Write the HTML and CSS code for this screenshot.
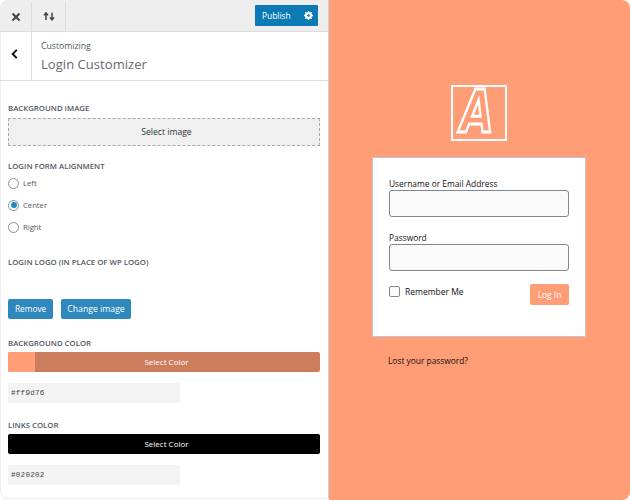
FILE: index.html
```html
<!DOCTYPE html>
<html lang="en">
<head>
<meta charset="UTF-8" />
<meta name="viewport" content="width=device-width, initial-scale=1.0" />
<title>Login Customizer</title>
<link rel="stylesheet" href="styles.css">
</head>
<body>
<div class="window">
<aside class="sidebar">
    <div class="topbar">
        <div class="top-btn close-btn">
            <svg width="10" height="10" viewBox="0 0 10 10"><path d="M1.5 1.5l7 7M8.5 1.5l-7 7" stroke="#3c434a" stroke-width="2" fill="none"/></svg>
        </div>
        <div class="top-btn order-btn">
            <svg width="12" height="9" viewBox="0 0 12 9"><path d="M3 8V1.5M1 3.4L3 .9l2 2.5M9 .8v6.5M7 5.4l2 2.5 2-2.5" stroke="#3c434a" stroke-width="1.5" fill="none"/></svg>
        </div>
        <div class="publish">
            <span>Publish</span>
            <svg width="9" height="9" viewBox="0 0 10 10"><circle cx="5" cy="5" r="2.9" fill="none" stroke="#fff" stroke-width="2"/><path d="M5 0v10M0 5h10M1.5 1.5l7 7M8.5 1.5l-7 7" stroke="#fff" stroke-width="1.4"/><circle cx="5" cy="5" r="1.5" fill="#0b7ab5"/></svg>
        </div>
    </div>
    <div class="section-head">
        <div class="back">
            <svg width="7" height="10" viewBox="0 0 7 10"><path d="M5.8.8L1.6 5l4.2 4.2" stroke="#000" stroke-width="1.8" fill="none"/></svg>
        </div>
        <div class="head-text">
            <div class="crumb">Customizing</div>
            <div class="head-title">Login Customizer</div>
        </div>
    </div>
    <div class="controls">
        <div class="control bg-image">
            <div class="label">BACKGROUND IMAGE</div>
            <div class="select-image">Select image</div>
        </div>
        <div class="control align">
            <div class="label">LOGIN FORM ALIGNMENT</div>
            <div class="radio"><span class="dot"></span>Left</div>
            <div class="radio"><span class="dot on"></span>Center</div>
            <div class="radio"><span class="dot"></span>Right</div>
        </div>
        <div class="control logo-ctl">
            <div class="label">LOGIN LOGO (IN PLACE OF WP LOGO)</div>
            <div class="logo-btns">
                <div class="wp-btn">Remove</div>
                <div class="wp-btn">Change image</div>
            </div>
        </div>
        <div class="control color-ctl">
            <div class="label">BACKGROUND COLOR</div>
            <div class="color-btn peach"><span class="swatch"></span><span class="color-text">Select Color</span></div>
            <div class="hex">#ff9d76</div>
        </div>
        <div class="control color-ctl links">
            <div class="label">LINKS COLOR</div>
            <div class="color-btn black"><span class="color-text">Select Color</span></div>
            <div class="hex">#020202</div>
        </div>
    </div>
</aside>
<main class="preview">
    <div class="login-logo">
        <svg class="logo-svg" width="56" height="56" viewBox="0 0 56 56"><rect x="1" y="1" width="54" height="54" fill="none" stroke="#fff" stroke-width="2"/><text transform="translate(26 47) scale(.74 1)" text-anchor="middle" class="logo-a">A</text></svg>
    </div>
    <form class="login-form">
        <div class="field-label">Username or Email Address</div>
        <div class="input"></div>
        <div class="field-label second">Password</div>
        <div class="input"></div>
        <div class="form-foot">
            <div class="remember"><span class="check"></span>Remember Me</div>
            <div class="login-btn">Log In</div>
        </div>
    </form>
    <div class="lost">Lost your password?</div>
</main>
</div>
</body>
</html>
```

FILE: styles.css
```css
html, body { margin: 0; padding: 0; background: #fff; }
body { font-family: "Open Sans", "Noto Sans", sans-serif; color: #3c434a; }
.window { display: flex; width: 630px; height: 500px; border-radius: 8px; overflow: hidden; }

.sidebar { width: 328px; height: 499px; border-right: 1px solid #c9d0d4; background: #fff; box-shadow: inset 1px 0 #eee, inset 0 -1px #eee; border-bottom-left-radius: 8px; }
.topbar { display: flex; align-items: center; height: 31px; background: #eee; border-bottom: 1px solid #ddd; }
.top-btn { display: flex; align-items: center; justify-content: center; height: 29px; margin-top: 2px; border-right: 1px solid #ddd; }
.close-btn { width: 31px; }
.order-btn { width: 33px; }
.publish { display: flex; align-items: center; justify-content: space-between; width: 63px; height: 21px; box-sizing: border-box; padding: 0 5px 0 7px; margin-left: auto; margin-right: 10px; background: #0b7ab5; color: #fff; font-size: 8.4px; border-radius: 1px; }

.section-head { display: flex; height: 48px; border-bottom: 1px solid #ddd; }
.back { display: flex; align-items: center; justify-content: center; width: 29px; padding: 0 2px 4px 0; border-right: 1px solid #ddd; }
.head-text { padding: 8px 0 0 9px; }
.crumb { font-size: 8.7px; line-height: 12px; color: #50575e; }
.head-title { margin-top: 4px; font-size: 13px; line-height: 17px; color: #646970; letter-spacing: 0.05px; }

.controls { padding: 0 8px; }
.label { font-size: 7.8px; line-height: 12px; font-weight: 600; color: #50575e; }
.bg-image { padding-top: 21px; }
.select-image { display: flex; align-items: center; justify-content: center; margin-top: 4px; padding-left: 5px; height: 28px; box-sizing: border-box; width: 312px; background: #f0f0f1; border: 1px dashed #a7aaad; font-size: 8.6px; color: #2c3338; }
.align { padding-top: 14px; }
.radio { display: flex; align-items: center; height: 22px; font-size: 7.7px; color: #50575e; }
.dot { display: flex; align-items: center; justify-content: center; width: 11px; height: 11px; box-sizing: border-box; margin-right: 4px; border: 1px solid #8c8f94; border-radius: 50%; background: #fff; }
.dot.on::after { content: ""; width: 6px; height: 6px; border-radius: 50%; background: #1e8cbe; }
.logo-ctl { padding-top: 18px; }
.logo-btns { display: flex; gap: 8px; margin-top: 31px; }
.wp-btn { height: 20px; line-height: 20px; padding: 0 7px; background: #2e88bd; color: #fff; font-size: 8.3px; border-radius: 2px; }
.wp-btn + .wp-btn { padding: 0 6px; font-size: 8.7px; }
.color-ctl { padding-top: 18px; }
.color-ctl.links { padding-top: 16px; }
.color-btn { display: flex; height: 20px; margin-top: 3px; width: 312px; border-radius: 2px; overflow: hidden; color: #fff; font-size: 8px; line-height: 20px; }
.color-btn.peach { background: #cc7d5e; }
.color-btn.black { background: #000; }
.swatch { width: 27px; background: #ff9d76; flex: none; }
.color-text { flex: 1; text-align: center; }
.peach .color-text { margin-left: -22px; }
.black .color-text { padding-left: 5px; }
.hex { width: 172px; height: 20px; margin-top: 11px; padding-left: 3px; box-sizing: border-box; background: #f3f3f3; border-radius: 2px; font-family: "Liberation Mono", monospace; font-size: 7.5px; line-height: 20px; letter-spacing: 0.3px; color: #3c434a; }

.preview { flex: 1; display: flex; flex-direction: column; align-items: center; background: #ff9d76; }
.login-logo { height: 56px; margin: 85px 1px 0 0; }
.logo-svg { display: block; overflow: visible; }
.logo-a { font-family: "DejaVu Sans", sans-serif; font-weight: bold; font-style: italic; font-size: 58px; fill: #ff9d76; stroke: #fff; stroke-width: 3px; }
.login-form { width: 214px; height: 180px; box-sizing: border-box; margin: 16px 1px 0 0; padding: 20px 16px 0; background: #fff; border: 1px solid #c3c4c7; color: #000; }
.field-label { font-size: 8.4px; line-height: 12px; color: #111; }
.field-label.second { margin-top: 15px; }
.input { height: 27px; box-sizing: border-box; background: #fafafa; border: 1px solid #7e8993; border-radius: 3px; }
.form-foot { display: flex; justify-content: space-between; margin-top: 13px; }
.remember { display: flex; align-items: center; height: 11px; margin-top: 2px; font-size: 8.5px; color: #111; }
.check { width: 11px; height: 11px; box-sizing: border-box; margin-right: 5px; background: #fafafa; border: 1px solid #7e8993; border-radius: 2px; flex: none; }
.login-btn { width: 39px; height: 21px; line-height: 21px; text-align: center; background: #ff9d76; color: #fff; font-size: 8.4px; border-radius: 2px; }
.lost { align-self: flex-start; margin: 18px 0 0 59px; font-size: 8.4px; line-height: 12px; color: #111; }
```
